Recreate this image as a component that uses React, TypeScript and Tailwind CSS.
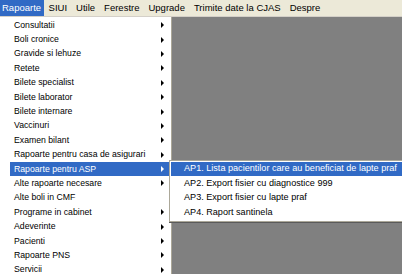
import React from 'react';

const topMenu = ['Rapoarte', 'SIUI', 'Utile', 'Ferestre', 'Upgrade', 'Trimite date la CJAS', 'Despre'];

const mainItems = [
  'Consultatii',
  'Boli cronice',
  'Gravide si lehuze',
  'Retete',
  'Bilete specialist',
  'Bilete laborator',
  'Bilete internare',
  'Vaccinuri',
  'Examen bilant',
  'Rapoarte pentru casa de asigurari',
  'Rapoarte pentru ASP',
  'Alte rapoarte necesare',
  'Alte boli in CMF',
  'Programe in cabinet',
  'Adeverinte',
  'Pacienti',
  'Rapoarte PNS',
  'Servicii',
];

// items without a submenu arrow
const noArrow = ['Alte boli in CMF'];

const subItems = [
  'AP1. Lista pacientilor care au beneficiat de lapte praf',
  'AP2. Export fisier cu diagnostice 999',
  'AP3. Export fisier cu lapte praf',
  'AP4. Raport santinela',
];

const Arrow = ({ white }: { white?: boolean }) => (
  <svg width="3" height="6" viewBox="0 0 3 6" className="shrink-0">
    <path d="M0 0 L3 3 L0 6 Z" fill={white ? '#ffffff' : '#000000'} />
  </svg>
);

export default function App() {
  return (
    <div
      className="w-[402px] h-[274px] flex flex-col overflow-hidden bg-[#808080] text-black"
      style={{ fontFamily: '"Liberation Sans", Arial, sans-serif' }}
    >
      {/* Menu bar */}
      <div className="h-[17px] flex items-stretch bg-[#ece9d8] border-b border-[#d4d0c8] shrink-0 text-[9.5px]">
        {topMenu.map((m, i) => (
          <div
            key={m}
            className={`flex items-center ${i === 0 ? 'bg-[#316ac5] text-white pl-[2px] pr-[3px]' : 'px-[4.5px]'}`}
          >
            {m}
          </div>
        ))}
      </div>

      {/* Client area */}
      <div className="relative flex-1 text-[8.7px]">
        {/* Rapoarte dropdown */}
        <div className="absolute left-0 top-0 w-[172px] bg-white border-r border-[#aca899] pt-[1px] flex flex-col">
          {mainItems.map((item) => {
            const active = item === 'Rapoarte pentru ASP';
            return (
              <div
                key={item}
                className={`h-[14.4px] flex items-center justify-between pl-[4px] pr-[6px] ml-[10px] mr-[1px] ${
                  active ? 'bg-[#316ac5] text-white' : ''
                }`}
              >
                <span className="whitespace-nowrap">{item}</span>
                {!noArrow.includes(item) && <Arrow white={active} />}
              </div>
            );
          })}
        </div>

        {/* ASP submenu */}
        <div className="absolute left-[169px] top-[143px] w-[233px] bg-white border-l border-t border-b border-[#aca899] shadow-[0_1px_0_#5a5a5a] py-[1px] flex flex-col text-[9.1px]">
          {subItems.map((s, i) => (
            <div
              key={s}
              className={`h-[14.4px] flex items-center pl-[13px] ml-[1px] whitespace-nowrap ${
                i === 0 ? 'bg-[#316ac5] text-white' : ''
              }`}
            >
              {s}
            </div>
          ))}
        </div>
      </div>
    </div>
  );
}
